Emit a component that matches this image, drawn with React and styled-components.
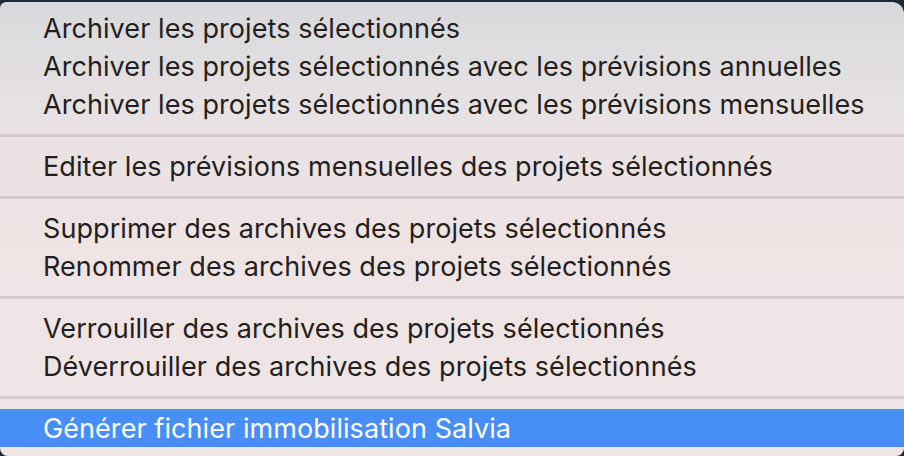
import React from 'react'
import styled, { createGlobalStyle } from 'styled-components'

const GlobalStyle = createGlobalStyle`
  html, body {
    margin: 0;
    padding: 0;
    background: #1e2836;
    width: 904px;
    height: 456px;
    overflow: hidden;
  }
`

const Menu = styled.div`
  margin-top: 2px;
  width: 904px;
  height: 454px;
  box-sizing: border-box;
  padding: 7px 0 8px;
  border-radius: 6px 12px 8px 8px;
  background: linear-gradient(180deg, #d8d9dc 0%, #e6e1e3 22%, #efe3e4 50%, #f0e6e6 100%);
  font-family: Inter, "Open Sans", "Liberation Sans", sans-serif;
  display: flex;
  flex-direction: column;
  overflow: hidden;
`

const Item = styled.div`
  height: 38px;
  display: flex;
  align-items: center;
  padding-left: 43px;
  font-size: 27px;
  letter-spacing: 0.07px;
  color: ${props => (props.active ? '#ffffff' : '#231f20')};
  background: ${props => (props.active ? '#478ef7' : 'transparent')};
`

const Separator = styled.div`
  height: 24px;
  display: flex;
  align-items: center;
  &::after {
    content: '';
    flex: 1;
    height: 3px;
    background: rgba(190, 170, 172, 0.45);
  }
`

const groups = [
  [
    'Archiver les projets sélectionnés',
    'Archiver les projets sélectionnés avec les prévisions annuelles',
    'Archiver les projets sélectionnés avec les prévisions mensuelles',
  ],
  ['Editer les prévisions mensuelles des projets sélectionnés'],
  [
    'Supprimer des archives des projets sélectionnés',
    'Renommer des archives des projets sélectionnés',
  ],
  [
    'Verrouiller des archives des projets sélectionnés',
    'Déverrouiller des archives des projets sélectionnés',
  ],
  ['Générer fichier immobilisation Salvia'],
]

const App = () => (
  <>
    <GlobalStyle />
    <Menu>
      {groups.map((group, gi) => (
        <React.Fragment key={gi}>
          {gi > 0 && <Separator />}
          {group.map(label => (
            <Item key={label} active={gi === groups.length - 1}>
              {label}
            </Item>
          ))}
        </React.Fragment>
      ))}
    </Menu>
  </>
)

export default App
